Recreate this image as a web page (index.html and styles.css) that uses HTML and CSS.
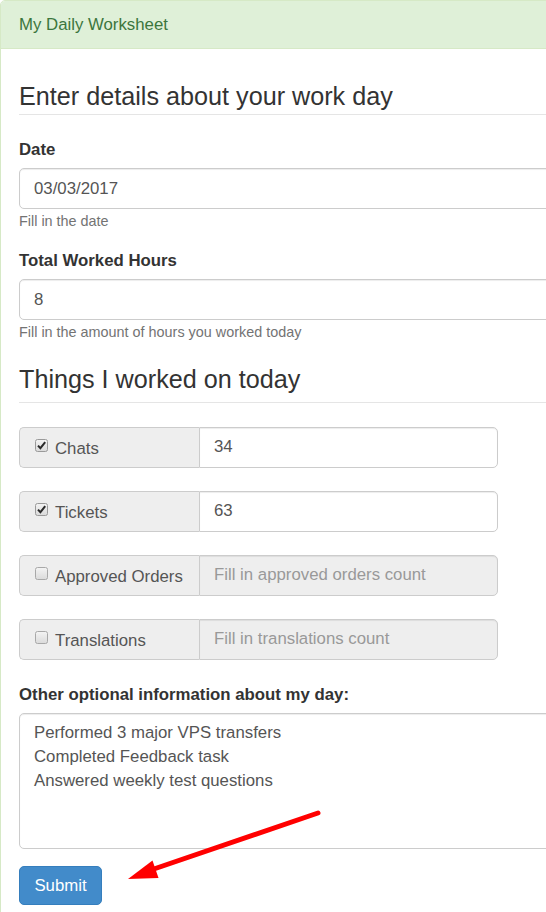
FILE: index.html
```html
<!DOCTYPE html>
<html>
<head>
<meta charset="utf-8">
<link rel="stylesheet" href="styles.css">
</head>
<body>
<div class="panel">
  <div class="panel-heading">My Daily Worksheet</div>
  <div class="panel-body">
    <h3 class="section-title first">Enter details about your work day</h3>

    <div class="form-group">
      <label class="label">Date</label>
      <div class="input">03/03/2017</div>
      <div class="help">Fill in the date</div>
    </div>

    <div class="form-group">
      <label class="label">Total Worked Hours</label>
      <div class="input">8</div>
      <div class="help">Fill in the amount of hours you worked today</div>
    </div>

    <h3 class="section-title second">Things I worked on today</h3>

    <div class="input-group">
      <div class="addon">
        <svg class="cb" width="13" height="13" viewBox="0 0 13 13"><defs><linearGradient id="g1" x1="0" y1="0" x2="0" y2="1"><stop offset="0" stop-color="#f4f4f4"/><stop offset="1" stop-color="#dadada"/></linearGradient></defs><rect x="0.5" y="0.5" width="12" height="12" rx="2" fill="url(#g1)" stroke="#9a9a9a"/><path d="M3 6.6 L5.4 9.2 L10.2 3.2" fill="none" stroke="#2a2a2a" stroke-width="2"/></svg>
        <span>Chats</span>
      </div>
      <div class="field">34</div>
    </div>

    <div class="input-group">
      <div class="addon">
        <svg class="cb" width="13" height="13" viewBox="0 0 13 13"><rect x="0.5" y="0.5" width="12" height="12" rx="2" fill="url(#g1)" stroke="#9a9a9a"/><path d="M3 6.6 L5.4 9.2 L10.2 3.2" fill="none" stroke="#2a2a2a" stroke-width="2"/></svg>
        <span>Tickets</span>
      </div>
      <div class="field">63</div>
    </div>

    <div class="input-group">
      <div class="addon">
        <svg class="cb" width="13" height="13" viewBox="0 0 13 13"><rect x="0.5" y="0.5" width="12" height="12" rx="2" fill="url(#g1)" stroke="#a8a8a8"/></svg>
        <span>Approved Orders</span>
      </div>
      <div class="field disabled">Fill in approved orders count</div>
    </div>

    <div class="input-group">
      <div class="addon">
        <svg class="cb" width="13" height="13" viewBox="0 0 13 13"><rect x="0.5" y="0.5" width="12" height="12" rx="2" fill="url(#g1)" stroke="#a8a8a8"/></svg>
        <span>Translations</span>
      </div>
      <div class="field disabled">Fill in translations count</div>
    </div>

    <div class="form-group">
      <label class="label">Other optional information about my day:</label>
      <div class="textarea">Performed 3 major VPS transfers<br>Completed Feedback task<br>Answered weekly test questions</div>
    </div>

    <button class="btn">Submit</button>
  </div>
</div>

<svg class="arrow" width="546" height="912" viewBox="0 0 546 912">
  <line x1="318" y1="813" x2="148" y2="871" stroke="#ff0000" stroke-width="5" stroke-linecap="round"/>
  <polygon points="128,879 152.5,860.5 158.5,878" fill="#ff0000"/>
</svg>
</body>
</html>
```

FILE: styles.css
```css
html, body {
  margin: 0;
  padding: 0;
  background: #fff;
  overflow: hidden;
}

body {
  font-family: "Liberation Sans", Arial, sans-serif;
  font-size: 16.8px;
  color: #333;
  width: 546px;
  height: 912px;
  position: relative;
}

.panel {
  width: 600px;
  border: 1px solid #d6e9c6;
  border-radius: 5px;
  box-sizing: border-box;
}

.panel-heading {
  background: #dff0d8;
  color: #3c763d;
  font-size: 16.8px;
  line-height: 24px;
  padding: 12px 18px 11px;
  border-bottom: 1px solid #d6e9c6;
  border-radius: 4px 4px 0 0;
}

.panel-body {
  padding: 18px;
}

.section-title {
  font-weight: normal;
  font-size: 25.2px;
  line-height: 30px;
  color: #333;
  border-bottom: 1px solid #e5e5e5;
  margin: 0;
}

.section-title.first {
  margin-top: 14px;
  padding-bottom: 3px;
  margin-bottom: 23px;
}

.section-title.second {
  margin-top: 22px;
  padding-bottom: 8px;
  margin-bottom: 24px;
}

.form-group {
  margin-bottom: 18px;
}

.label {
  display: block;
  font-weight: bold;
  line-height: 24px;
  margin-bottom: 6px;
}

.input {
  height: 41px;
  box-sizing: border-box;
  border: 1px solid #ccc;
  border-radius: 5px;
  padding: 0 14px;
  line-height: 39px;
  color: #555;
  box-shadow: inset 0 1px 1px rgba(0, 0, 0, .075);
}

.help {
  font-size: 14.4px;
  line-height: 20px;
  color: #737373;
  margin-top: 2px;
}

.input-group {
  display: flex;
  width: 479px;
  height: 41px;
  margin-bottom: 23px;
}

.input-group + .form-group {
  margin-top: 22px;
}

.addon {
  width: 180px;
  flex: none;
  box-sizing: border-box;
  background: #eee;
  border: 1px solid #ccc;
  border-right: 0;
  border-radius: 5px 0 0 5px;
  display: flex;
  align-items: center;
  padding-left: 15px;
  color: #555;
  gap: 7px;
}

.addon span {
  position: relative;
  top: 1px;
}

.cb {
  flex: none;
  position: relative;
  top: -2px;
}

.field {
  flex: 1;
  box-sizing: border-box;
  border: 1px solid #ccc;
  border-radius: 0 5px 5px 0;
  padding: 0 14px;
  line-height: 38px;
  color: #555;
  box-shadow: inset 0 1px 1px rgba(0, 0, 0, .075);
}

.field.disabled {
  background: #eee;
  color: #999;
}

.textarea {
  height: 136px;
  box-sizing: border-box;
  border: 1px solid #ccc;
  border-radius: 5px;
  padding: 7px 14px;
  line-height: 24px;
  color: #555;
  box-shadow: inset 0 1px 1px rgba(0, 0, 0, .075);
}

.btn {
  display: block;
  font-family: "Liberation Sans", Arial, sans-serif;
  font-size: 16.8px;
  line-height: 24px;
  color: #fff;
  background: #428bca;
  border: 1px solid #357ebd;
  border-radius: 5px;
  padding: 7px 14px;
  height: 39px;
  box-sizing: border-box;
  width: 83px;
  margin-top: -1px;
}

.arrow {
  position: absolute;
  left: 0;
  top: 0;
  pointer-events: none;
}
```
